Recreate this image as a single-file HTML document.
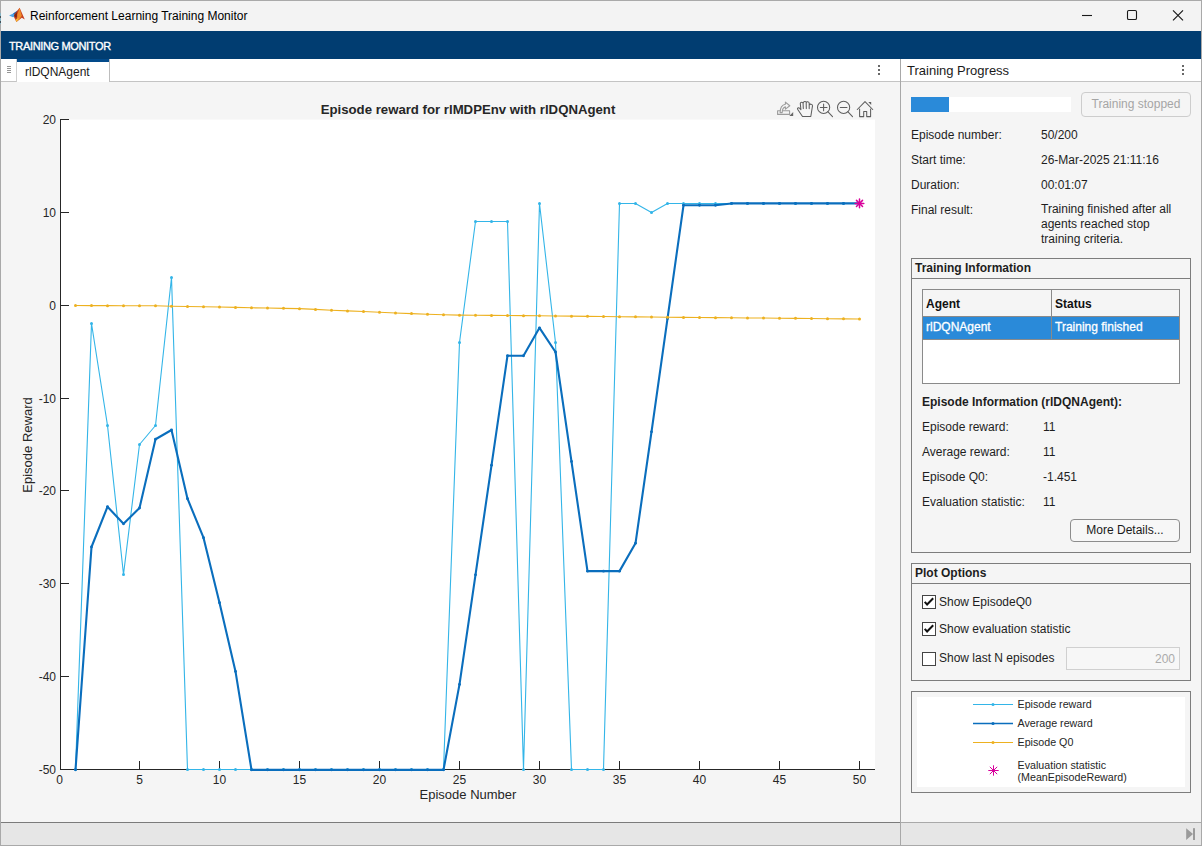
<!DOCTYPE html>
<html><head><meta charset="utf-8"><style>
*{box-sizing:border-box}
html,body{margin:0;padding:0}
body{width:1202px;height:846px;overflow:hidden;position:relative;background:#f5f5f5;font-family:"Liberation Sans",sans-serif;font-size:12px;color:#1e1e1e}
.abs{position:absolute}
.t{position:absolute;white-space:nowrap;line-height:14px}
.grp{position:absolute;border:1px solid #7d7d7d}
.chk{position:absolute;width:14px;height:14px;border:1px solid #444;background:#fff}
</style></head><body>
<!-- window border -->
<div class="abs" style="left:0;top:0;width:1202px;height:846px;border:1px solid #a9a9a9;z-index:50;pointer-events:none"></div>
<!-- title bar -->
<div class="abs" style="left:0;top:13px;width:1px;height:11px;background:#86b4c4;z-index:60"></div>
<div class="abs" style="left:0;top:16px;width:1px;height:2px;background:#46535a;z-index:60"></div>
<div class="abs" style="left:0;top:21px;width:1px;height:2px;background:#46535a;z-index:60"></div>
<div class="abs" style="left:0;top:0;width:1202px;height:31px;background:#f3f3f3"></div>
<svg class="abs" style="left:8px;top:6px" width="18" height="18" viewBox="8 6 18 18">
<path d="M9.1 15.6 L13.2 13.4 L15.6 12.2 L14.8 16.6 L13 17.2 Z" fill="#4aa3e8"/>
<path d="M13.2 13.4 L17.8 10.2 L16.3 15.6 L14.4 14.8 Z" fill="#2c62a8"/>
<path d="M14.4 14.6 L19.6 7.7 L24.8 19.6 L21.8 17.8 L16.4 22 L14.2 17.6 Z" fill="#c8401f"/>
<path d="M14.3 15.2 L17 12 L16.8 17.5 L14.6 17.2 Z" fill="#7e2414"/>
<path d="M17.4 14.2 L19.6 7.9 L21.8 15.8 L19.6 19 L16.8 21.5 Z" fill="#ee8b2a"/>
<path d="M15.6 19.5 L18.8 18 L16.6 22 Z" fill="#f6c133"/>
</svg>
<div class="t" style="left:30px;top:9px;font-size:12px;color:#000">Reinforcement Learning Training Monitor</div>
<svg class="abs" style="left:1070px;top:0" width="132" height="31" viewBox="1070 0 132 31" fill="none" stroke="#1a1a1a" stroke-width="1">
<path d="M1082 15.5 h10" stroke-width="1.1"/>
<rect x="1127.5" y="10.5" width="9" height="9" rx="1.3" stroke-width="1.1"/>
<path d="M1173 10.3 l10 10 M1183 10.3 l-10 10" stroke-width="1.15"/>
</svg>
<!-- blue bar -->
<div class="abs" style="left:0;top:31px;width:1202px;height:28px;background:#013d71"></div>
<div class="t" style="left:9px;top:39px;font-size:11px;letter-spacing:-0.35px;color:#fff;-webkit-text-stroke:0.35px #fff">TRAINING MONITOR</div>
<!-- tab row left -->
<div class="abs" style="left:1px;top:59px;width:899px;height:23px;background:#fff;border-bottom:1px solid #c4c4c4"></div>
<div class="abs" style="left:1px;top:59px;width:16px;height:23px;background:#fff;border-right:1px solid #cfcfcf;border-bottom:1px solid #c4c4c4"></div>
<svg class="abs" style="left:6px;top:65px" width="6" height="9" viewBox="0 0 6 9"><g stroke="#8a8a8a" stroke-width="0.9"><path d="M1 1.5h4M1 3.5h4M1 5.5h4M1 7.5h4"/></g></svg>
<div class="abs" style="left:17px;top:59px;width:92px;height:23px;background:#fff;border-top:3px solid #024a8a"></div>
<div class="abs" style="left:109px;top:59px;width:1px;height:23px;background:#bdbdbd"></div>
<div class="t" style="left:25px;top:65px;font-size:12px;color:#1a1a1a">rlDQNAgent</div>
<svg class="abs" style="left:876px;top:63px" width="6" height="14" viewBox="876 63 6 14"><g fill="#686868"><rect x="878" y="65" width="2" height="2"/><rect x="878" y="69" width="2" height="2"/><rect x="878" y="73" width="2" height="2"/></g></svg>
<!-- right header -->
<div class="abs" style="left:900px;top:59px;width:301px;height:23px;background:#fff;border-bottom:1px solid #c4c4c4"></div>
<div class="t" style="left:907px;top:64px;font-size:13px;color:#1a1a1a">Training Progress</div>
<svg class="abs" style="left:1180px;top:63px" width="6" height="14" viewBox="1180 63 6 14"><g fill="#686868"><rect x="1182" y="65" width="2" height="2"/><rect x="1182" y="69" width="2" height="2"/><rect x="1182" y="73" width="2" height="2"/></g></svg>
<!-- separator -->
<div class="abs" style="left:900px;top:59px;width:1px;height:787px;background:#a8a8a8;z-index:5"></div>
<!-- status bar -->
<div class="abs" style="left:0;top:822px;width:1202px;height:24px;background:#e6e6e6;border-top:1px solid #a9a9a9"></div>
<div class="abs" style="left:1px;top:822px;width:899px;height:1px;background:#7b7b7b"></div>
<svg class="abs" style="left:1184px;top:826px" width="14" height="16" viewBox="1184 826 14 16"><path d="M1186.2 828.2 L1193 834.1 L1186.2 840z" fill="#9a9a9a"/><rect x="1193" y="828.2" width="2" height="11.8" fill="#9a9a9a"/></svg>
<svg class="abs" style="left:0;top:82px" width="900" height="740" viewBox="0 82 900 740">
<rect x="61" y="119.6" width="814" height="650" fill="#fff"/>
<g stroke="#262626" stroke-width="1" fill="none" shape-rendering="crispEdges">
<line x1="60.5" y1="119" x2="60.5" y2="770"/>
<line x1="60" y1="769.5" x2="875" y2="769.5"/>
<line x1="60" y1="119.5" x2="68.5" y2="119.5"/><line x1="60" y1="212.5" x2="68.5" y2="212.5"/><line x1="60" y1="305.5" x2="68.5" y2="305.5"/><line x1="60" y1="398.5" x2="68.5" y2="398.5"/><line x1="60" y1="490.5" x2="68.5" y2="490.5"/><line x1="60" y1="583.5" x2="68.5" y2="583.5"/><line x1="60" y1="676.5" x2="68.5" y2="676.5"/><line x1="60" y1="769.5" x2="68.5" y2="769.5"/><line x1="139.5" y1="760.5" x2="139.5" y2="769"/><line x1="219.5" y1="760.5" x2="219.5" y2="769"/><line x1="299.5" y1="760.5" x2="299.5" y2="769"/><line x1="379.5" y1="760.5" x2="379.5" y2="769"/><line x1="459.5" y1="760.5" x2="459.5" y2="769"/><line x1="539.5" y1="760.5" x2="539.5" y2="769"/><line x1="619.5" y1="760.5" x2="619.5" y2="769"/><line x1="699.5" y1="760.5" x2="699.5" y2="769"/><line x1="779.5" y1="760.5" x2="779.5" y2="769"/><line x1="859.5" y1="760.5" x2="859.5" y2="769"/>
</g>
<g font-family="Liberation Sans" font-size="12" fill="#262626"><text x="56" y="123.9" text-anchor="end">20</text><text x="56" y="216.8" text-anchor="end">10</text><text x="56" y="309.6" text-anchor="end">0</text><text x="56" y="402.5" text-anchor="end">-10</text><text x="56" y="495.3" text-anchor="end">-20</text><text x="56" y="588.2" text-anchor="end">-30</text><text x="56" y="681.0" text-anchor="end">-40</text><text x="56" y="773.9" text-anchor="end">-50</text><text x="59.5" y="784.3" text-anchor="middle">0</text><text x="139.5" y="784.3" text-anchor="middle">5</text><text x="219.5" y="784.3" text-anchor="middle">10</text><text x="299.5" y="784.3" text-anchor="middle">15</text><text x="379.5" y="784.3" text-anchor="middle">20</text><text x="459.5" y="784.3" text-anchor="middle">25</text><text x="539.5" y="784.3" text-anchor="middle">30</text><text x="619.5" y="784.3" text-anchor="middle">35</text><text x="699.5" y="784.3" text-anchor="middle">40</text><text x="779.5" y="784.3" text-anchor="middle">45</text><text x="859.5" y="784.3" text-anchor="middle">50</text></g>
<text x="468" y="798.8" text-anchor="middle" font-family="Liberation Sans" font-size="13" fill="#262626">Episode Number</text>
<text transform="translate(32.4,445) rotate(-90)" text-anchor="middle" font-family="Liberation Sans" font-size="13" fill="#262626">Episode Reward</text>
<text x="468" y="114.2" text-anchor="middle" font-family="Liberation Sans" font-weight="bold" font-size="13.2" fill="#262626">Episode reward for rlMDPEnv with rlDQNAgent</text>
<polyline points="75.50,769.50 91.50,323.50 107.50,425.50 123.50,574.50 139.50,444.50 155.50,425.50 171.50,277.50 187.50,769.50 203.50,769.50 219.50,769.50 235.50,769.50 251.50,769.50 267.50,769.50 283.50,769.50 299.50,769.50 315.50,769.50 331.50,769.50 347.50,769.50 363.50,769.50 379.50,769.50 395.50,769.50 411.50,769.50 427.50,769.50 443.50,769.50 459.50,342.50 475.50,221.50 491.50,221.50 507.50,221.50 523.50,769.50 539.50,203.50 555.50,342.50 571.50,769.50 587.50,769.50 603.50,769.50 619.50,203.50 635.50,203.50 651.50,212.50 667.50,203.50 683.50,203.50 699.50,203.50 715.50,203.50 731.50,203.50 747.50,203.50 763.50,203.50 779.50,203.50 795.50,203.50 811.50,203.50 827.50,203.50 843.50,203.50 859.50,203.50" fill="none" stroke="#33b5e8" stroke-width="1.1" stroke-linejoin="round"/>
<circle cx="75.50" cy="769.50" r="1.5" fill="#33b5e8"/><circle cx="91.50" cy="323.50" r="1.5" fill="#33b5e8"/><circle cx="107.50" cy="425.50" r="1.5" fill="#33b5e8"/><circle cx="123.50" cy="574.50" r="1.5" fill="#33b5e8"/><circle cx="139.50" cy="444.50" r="1.5" fill="#33b5e8"/><circle cx="155.50" cy="425.50" r="1.5" fill="#33b5e8"/><circle cx="171.50" cy="277.50" r="1.5" fill="#33b5e8"/><circle cx="187.50" cy="769.50" r="1.5" fill="#33b5e8"/><circle cx="203.50" cy="769.50" r="1.5" fill="#33b5e8"/><circle cx="219.50" cy="769.50" r="1.5" fill="#33b5e8"/><circle cx="235.50" cy="769.50" r="1.5" fill="#33b5e8"/><circle cx="251.50" cy="769.50" r="1.5" fill="#33b5e8"/><circle cx="267.50" cy="769.50" r="1.5" fill="#33b5e8"/><circle cx="283.50" cy="769.50" r="1.5" fill="#33b5e8"/><circle cx="299.50" cy="769.50" r="1.5" fill="#33b5e8"/><circle cx="315.50" cy="769.50" r="1.5" fill="#33b5e8"/><circle cx="331.50" cy="769.50" r="1.5" fill="#33b5e8"/><circle cx="347.50" cy="769.50" r="1.5" fill="#33b5e8"/><circle cx="363.50" cy="769.50" r="1.5" fill="#33b5e8"/><circle cx="379.50" cy="769.50" r="1.5" fill="#33b5e8"/><circle cx="395.50" cy="769.50" r="1.5" fill="#33b5e8"/><circle cx="411.50" cy="769.50" r="1.5" fill="#33b5e8"/><circle cx="427.50" cy="769.50" r="1.5" fill="#33b5e8"/><circle cx="443.50" cy="769.50" r="1.5" fill="#33b5e8"/><circle cx="459.50" cy="342.50" r="1.5" fill="#33b5e8"/><circle cx="475.50" cy="221.50" r="1.5" fill="#33b5e8"/><circle cx="491.50" cy="221.50" r="1.5" fill="#33b5e8"/><circle cx="507.50" cy="221.50" r="1.5" fill="#33b5e8"/><circle cx="523.50" cy="769.50" r="1.5" fill="#33b5e8"/><circle cx="539.50" cy="203.50" r="1.5" fill="#33b5e8"/><circle cx="555.50" cy="342.50" r="1.5" fill="#33b5e8"/><circle cx="571.50" cy="769.50" r="1.5" fill="#33b5e8"/><circle cx="587.50" cy="769.50" r="1.5" fill="#33b5e8"/><circle cx="603.50" cy="769.50" r="1.5" fill="#33b5e8"/><circle cx="619.50" cy="203.50" r="1.5" fill="#33b5e8"/><circle cx="635.50" cy="203.50" r="1.5" fill="#33b5e8"/><circle cx="651.50" cy="212.50" r="1.5" fill="#33b5e8"/><circle cx="667.50" cy="203.50" r="1.5" fill="#33b5e8"/><circle cx="683.50" cy="203.50" r="1.5" fill="#33b5e8"/><circle cx="699.50" cy="203.50" r="1.5" fill="#33b5e8"/><circle cx="715.50" cy="203.50" r="1.5" fill="#33b5e8"/><circle cx="731.50" cy="203.50" r="1.5" fill="#33b5e8"/><circle cx="747.50" cy="203.50" r="1.5" fill="#33b5e8"/><circle cx="763.50" cy="203.50" r="1.5" fill="#33b5e8"/><circle cx="779.50" cy="203.50" r="1.5" fill="#33b5e8"/><circle cx="795.50" cy="203.50" r="1.5" fill="#33b5e8"/><circle cx="811.50" cy="203.50" r="1.5" fill="#33b5e8"/><circle cx="827.50" cy="203.50" r="1.5" fill="#33b5e8"/><circle cx="843.50" cy="203.50" r="1.5" fill="#33b5e8"/><circle cx="859.50" cy="203.50" r="1.5" fill="#33b5e8"/>
<polyline points="75.50,769.85 91.50,546.99 107.50,506.75 123.50,523.78 139.50,507.99 155.50,439.28 171.50,429.99 187.50,498.71 203.50,537.71 219.50,602.71 235.50,671.42 251.50,769.85 267.50,769.85 283.50,769.85 299.50,769.85 315.50,769.85 331.50,769.85 347.50,769.85 363.50,769.85 379.50,769.85 395.50,769.85 411.50,769.85 427.50,769.85 443.50,769.85 459.50,684.42 475.50,574.85 491.50,465.28 507.50,355.71 523.50,355.71 539.50,327.85 555.50,351.99 571.50,461.56 587.50,571.14 603.50,571.14 619.50,571.14 635.50,543.28 651.50,431.85 667.50,318.56 683.50,205.28 699.50,205.28 715.50,205.28 731.50,203.42 747.50,203.42 763.50,203.42 779.50,203.42 795.50,203.42 811.50,203.42 827.50,203.42 843.50,203.42 859.50,203.42" fill="none" stroke="#0a6ebd" stroke-width="2.1" stroke-linejoin="round"/>
<circle cx="75.50" cy="769.85" r="1.45" fill="#0a6ebd"/><circle cx="91.50" cy="546.99" r="1.45" fill="#0a6ebd"/><circle cx="107.50" cy="506.75" r="1.45" fill="#0a6ebd"/><circle cx="123.50" cy="523.78" r="1.45" fill="#0a6ebd"/><circle cx="139.50" cy="507.99" r="1.45" fill="#0a6ebd"/><circle cx="155.50" cy="439.28" r="1.45" fill="#0a6ebd"/><circle cx="171.50" cy="429.99" r="1.45" fill="#0a6ebd"/><circle cx="187.50" cy="498.71" r="1.45" fill="#0a6ebd"/><circle cx="203.50" cy="537.71" r="1.45" fill="#0a6ebd"/><circle cx="219.50" cy="602.71" r="1.45" fill="#0a6ebd"/><circle cx="235.50" cy="671.42" r="1.45" fill="#0a6ebd"/><circle cx="251.50" cy="769.85" r="1.45" fill="#0a6ebd"/><circle cx="267.50" cy="769.85" r="1.45" fill="#0a6ebd"/><circle cx="283.50" cy="769.85" r="1.45" fill="#0a6ebd"/><circle cx="299.50" cy="769.85" r="1.45" fill="#0a6ebd"/><circle cx="315.50" cy="769.85" r="1.45" fill="#0a6ebd"/><circle cx="331.50" cy="769.85" r="1.45" fill="#0a6ebd"/><circle cx="347.50" cy="769.85" r="1.45" fill="#0a6ebd"/><circle cx="363.50" cy="769.85" r="1.45" fill="#0a6ebd"/><circle cx="379.50" cy="769.85" r="1.45" fill="#0a6ebd"/><circle cx="395.50" cy="769.85" r="1.45" fill="#0a6ebd"/><circle cx="411.50" cy="769.85" r="1.45" fill="#0a6ebd"/><circle cx="427.50" cy="769.85" r="1.45" fill="#0a6ebd"/><circle cx="443.50" cy="769.85" r="1.45" fill="#0a6ebd"/><circle cx="459.50" cy="684.42" r="1.45" fill="#0a6ebd"/><circle cx="475.50" cy="574.85" r="1.45" fill="#0a6ebd"/><circle cx="491.50" cy="465.28" r="1.45" fill="#0a6ebd"/><circle cx="507.50" cy="355.71" r="1.45" fill="#0a6ebd"/><circle cx="523.50" cy="355.71" r="1.45" fill="#0a6ebd"/><circle cx="539.50" cy="327.85" r="1.45" fill="#0a6ebd"/><circle cx="555.50" cy="351.99" r="1.45" fill="#0a6ebd"/><circle cx="571.50" cy="461.56" r="1.45" fill="#0a6ebd"/><circle cx="587.50" cy="571.14" r="1.45" fill="#0a6ebd"/><circle cx="603.50" cy="571.14" r="1.45" fill="#0a6ebd"/><circle cx="619.50" cy="571.14" r="1.45" fill="#0a6ebd"/><circle cx="635.50" cy="543.28" r="1.45" fill="#0a6ebd"/><circle cx="651.50" cy="431.85" r="1.45" fill="#0a6ebd"/><circle cx="667.50" cy="318.56" r="1.45" fill="#0a6ebd"/><circle cx="683.50" cy="205.28" r="1.45" fill="#0a6ebd"/><circle cx="699.50" cy="205.28" r="1.45" fill="#0a6ebd"/><circle cx="715.50" cy="205.28" r="1.45" fill="#0a6ebd"/><circle cx="731.50" cy="203.42" r="1.45" fill="#0a6ebd"/><circle cx="747.50" cy="203.42" r="1.45" fill="#0a6ebd"/><circle cx="763.50" cy="203.42" r="1.45" fill="#0a6ebd"/><circle cx="779.50" cy="203.42" r="1.45" fill="#0a6ebd"/><circle cx="795.50" cy="203.42" r="1.45" fill="#0a6ebd"/><circle cx="811.50" cy="203.42" r="1.45" fill="#0a6ebd"/><circle cx="827.50" cy="203.42" r="1.45" fill="#0a6ebd"/><circle cx="843.50" cy="203.42" r="1.45" fill="#0a6ebd"/><circle cx="859.50" cy="203.42" r="1.45" fill="#0a6ebd"/>
<polyline points="75.50,305.56 91.50,305.60 107.50,305.64 123.50,305.68 139.50,305.71 155.50,305.75 171.50,306.21 187.50,306.46 203.50,306.71 219.50,306.96 235.50,307.38 251.50,307.79 267.50,308.07 283.50,308.35 299.50,308.63 315.50,309.42 331.50,310.21 347.50,310.89 363.50,311.57 379.50,312.25 395.50,312.93 411.50,313.61 427.50,314.29 443.50,314.71 459.50,315.13 475.50,315.26 491.50,315.39 507.50,315.52 523.50,315.65 539.50,315.78 555.50,315.96 571.50,316.15 587.50,316.34 603.50,316.52 619.50,316.71 635.50,316.87 651.50,317.04 667.50,317.21 683.50,317.38 699.50,317.54 715.50,317.67 731.50,317.80 747.50,317.93 763.50,318.06 779.50,318.19 795.50,318.36 811.50,318.53 827.50,318.70 843.50,318.87 859.50,319.04" fill="none" stroke="#edb120" stroke-width="1.1" stroke-linejoin="round"/>
<circle cx="75.50" cy="305.56" r="1.5" fill="#edb120"/><circle cx="91.50" cy="305.60" r="1.5" fill="#edb120"/><circle cx="107.50" cy="305.64" r="1.5" fill="#edb120"/><circle cx="123.50" cy="305.68" r="1.5" fill="#edb120"/><circle cx="139.50" cy="305.71" r="1.5" fill="#edb120"/><circle cx="155.50" cy="305.75" r="1.5" fill="#edb120"/><circle cx="171.50" cy="306.21" r="1.5" fill="#edb120"/><circle cx="187.50" cy="306.46" r="1.5" fill="#edb120"/><circle cx="203.50" cy="306.71" r="1.5" fill="#edb120"/><circle cx="219.50" cy="306.96" r="1.5" fill="#edb120"/><circle cx="235.50" cy="307.38" r="1.5" fill="#edb120"/><circle cx="251.50" cy="307.79" r="1.5" fill="#edb120"/><circle cx="267.50" cy="308.07" r="1.5" fill="#edb120"/><circle cx="283.50" cy="308.35" r="1.5" fill="#edb120"/><circle cx="299.50" cy="308.63" r="1.5" fill="#edb120"/><circle cx="315.50" cy="309.42" r="1.5" fill="#edb120"/><circle cx="331.50" cy="310.21" r="1.5" fill="#edb120"/><circle cx="347.50" cy="310.89" r="1.5" fill="#edb120"/><circle cx="363.50" cy="311.57" r="1.5" fill="#edb120"/><circle cx="379.50" cy="312.25" r="1.5" fill="#edb120"/><circle cx="395.50" cy="312.93" r="1.5" fill="#edb120"/><circle cx="411.50" cy="313.61" r="1.5" fill="#edb120"/><circle cx="427.50" cy="314.29" r="1.5" fill="#edb120"/><circle cx="443.50" cy="314.71" r="1.5" fill="#edb120"/><circle cx="459.50" cy="315.13" r="1.5" fill="#edb120"/><circle cx="475.50" cy="315.26" r="1.5" fill="#edb120"/><circle cx="491.50" cy="315.39" r="1.5" fill="#edb120"/><circle cx="507.50" cy="315.52" r="1.5" fill="#edb120"/><circle cx="523.50" cy="315.65" r="1.5" fill="#edb120"/><circle cx="539.50" cy="315.78" r="1.5" fill="#edb120"/><circle cx="555.50" cy="315.96" r="1.5" fill="#edb120"/><circle cx="571.50" cy="316.15" r="1.5" fill="#edb120"/><circle cx="587.50" cy="316.34" r="1.5" fill="#edb120"/><circle cx="603.50" cy="316.52" r="1.5" fill="#edb120"/><circle cx="619.50" cy="316.71" r="1.5" fill="#edb120"/><circle cx="635.50" cy="316.87" r="1.5" fill="#edb120"/><circle cx="651.50" cy="317.04" r="1.5" fill="#edb120"/><circle cx="667.50" cy="317.21" r="1.5" fill="#edb120"/><circle cx="683.50" cy="317.38" r="1.5" fill="#edb120"/><circle cx="699.50" cy="317.54" r="1.5" fill="#edb120"/><circle cx="715.50" cy="317.67" r="1.5" fill="#edb120"/><circle cx="731.50" cy="317.80" r="1.5" fill="#edb120"/><circle cx="747.50" cy="317.93" r="1.5" fill="#edb120"/><circle cx="763.50" cy="318.06" r="1.5" fill="#edb120"/><circle cx="779.50" cy="318.19" r="1.5" fill="#edb120"/><circle cx="795.50" cy="318.36" r="1.5" fill="#edb120"/><circle cx="811.50" cy="318.53" r="1.5" fill="#edb120"/><circle cx="827.50" cy="318.70" r="1.5" fill="#edb120"/><circle cx="843.50" cy="318.87" r="1.5" fill="#edb120"/><circle cx="859.50" cy="319.04" r="1.5" fill="#edb120"/>
<g stroke="#d8009b" stroke-width="1.5" stroke-linecap="round"><line x1="855.20" y1="203.40" x2="863.80" y2="203.40"/><line x1="856.46" y1="200.36" x2="862.54" y2="206.44"/><line x1="859.50" y1="199.10" x2="859.50" y2="207.70"/><line x1="862.54" y1="200.36" x2="856.46" y2="206.44"/></g>
</svg>
<svg class="abs" style="left:770px;top:95px" width="110" height="25" viewBox="770 95 110 25" fill="none" stroke-linecap="round" stroke-linejoin="round">
<g stroke="#9c9c9c" stroke-width="1.1">
<rect x="777.6" y="110.8" width="12" height="3.6"/>
<path d="M780.1 112.6 C780.1 107.6 782.4 104.9 785.4 104.3 L785.4 102.1 L789.8 105.7 L785.4 109.1 L785.4 106.9 C783.8 107.2 782.3 109 782.2 112.6 Z" fill="#f5f5f5"/>
</g>
<path d="M789.3 116 L793.2 112.1 L793.2 116 Z" fill="#666" stroke="none"/>
<g stroke="#5e5e5e" stroke-width="1.05">
<path d="M802.5 116.5 L797.6 109.3 C797.1 108.3 798.3 107.3 799.3 108 L800.9 109.6 L800.3 103.6 C800.2 101.8 803 101.8 803.1 103.4 C803.2 100.9 806.1 100.9 806.2 102.7 C806.5 101.2 809.2 101.4 809.2 103.3 L809.3 105.2 C809.7 103.6 812.6 103.8 812.5 105.8 L811.6 111.5 L810.8 116.5 Z M803.1 103.4 L803.3 108.6 M806.2 102.7 L806.3 108.6 M809.2 103.3 L809.2 108.6"/>
<circle cx="823.6" cy="107.4" r="6.1"/><path d="M827.8 111.7 L832.5 116.6"/><path d="M820.3 107.4 h6.7 M823.6 104.1 v6.6"/>
<circle cx="843.6" cy="107.4" r="6.1"/><path d="M847.8 111.7 L852.5 116.6"/><path d="M840.3 107.4 h6.7"/>
<path d="M857.3 109.5 L865 101.6 L872.7 109.5 M859.6 109 V116.6 H863.7 V111.4 H866.7 V116.6 H870.6 V109"/>
</g>
<path d="M868.3 102 H871.2 V104.9 Z" fill="#5e5e5e" stroke="none"/>
</svg>
<!-- right panel content -->
<div class="abs" style="left:911px;top:97px;width:160px;height:15px;background:#fff"></div>
<div class="abs" style="left:911px;top:97px;width:38px;height:15px;background:#2a8ad9"></div>
<div class="abs" style="left:1081px;top:92px;width:110px;height:25px;border:1px solid #cdcdcd;border-radius:4px;background:#f5f5f5;color:#a5a5a5;font-size:12px;text-align:center;line-height:23px">Training stopped</div>
<div class="t" style="left:911px;top:128px">Episode number:</div>
<div class="t" style="left:1041px;top:128px">50/200</div>
<div class="t" style="left:911px;top:153px">Start time:</div>
<div class="t" style="left:1041px;top:153px">26-Mar-2025 21:11:16</div>
<div class="t" style="left:911px;top:178px">Duration:</div>
<div class="t" style="left:1041px;top:178px">00:01:07</div>
<div class="t" style="left:911px;top:203px">Final result:</div>
<div class="t" style="left:1041px;top:201.8px">Training finished after all</div>
<div class="t" style="left:1041px;top:216.6px">agents reached stop</div>
<div class="t" style="left:1041px;top:232.2px">training criteria.</div>
<!-- Training information group -->
<div class="grp" style="left:911px;top:258px;width:280px;height:295px"></div>
<div class="abs" style="left:912px;top:278px;width:278px;height:1px;background:#7d7d7d"></div>
<div class="t" style="left:915px;top:261px;font-weight:bold">Training Information</div>
<div class="abs" style="left:922px;top:289px;width:258px;height:95px;border:1px solid #8a8a8a;background:#fff"></div>
<div class="abs" style="left:923px;top:290px;width:256px;height:27px;background:#f5f5f5;border-bottom:1px solid #8a8a8a"></div>
<div class="abs" style="left:923px;top:317px;width:256px;height:23px;background:#2a8ad9;border-bottom:1px solid #8a8a8a"></div>
<div class="abs" style="left:1051px;top:290px;width:1px;height:49px;background:#8a8a8a"></div>
<div class="t" style="left:926px;top:297px;font-weight:bold;color:#111">Agent</div>
<div class="t" style="left:1055px;top:297px;font-weight:bold;color:#111">Status</div>
<div class="t" style="left:926px;top:320px;color:#fff;-webkit-text-stroke:0.3px #fff">rlDQNAgent</div>
<div class="t" style="left:1055px;top:320px;color:#fff;-webkit-text-stroke:0.3px #fff">Training finished</div>
<div class="t" style="left:922px;top:395px;font-weight:bold">Episode Information (rlDQNAgent):</div>
<div class="t" style="left:922px;top:420px">Episode reward:</div>
<div class="t" style="left:1043px;top:420px">11</div>
<div class="t" style="left:922px;top:445px">Average reward:</div>
<div class="t" style="left:1043px;top:445px">11</div>
<div class="t" style="left:922px;top:470px">Episode Q0:</div>
<div class="t" style="left:1043px;top:470px">-1.451</div>
<div class="t" style="left:922px;top:495px">Evaluation statistic:</div>
<div class="t" style="left:1043px;top:495px">11</div>
<div class="abs" style="left:1070px;top:519px;width:110px;height:23px;border:1px solid #8d8d8d;border-radius:4px;background:#f7f7f7;font-size:12px;text-align:center;line-height:21px;color:#1a1a1a">More Details...</div>
<!-- Plot options group -->
<div class="grp" style="left:911px;top:563px;width:280px;height:118px"></div>
<div class="abs" style="left:912px;top:583px;width:278px;height:1px;background:#7d7d7d"></div>
<div class="t" style="left:915px;top:566px;font-weight:bold">Plot Options</div>
<div class="chk" style="left:922px;top:595px"></div>
<div class="chk" style="left:922px;top:622px"></div>
<div class="chk" style="left:922px;top:652px"></div>
<svg class="abs" style="left:922px;top:595px" width="14" height="14" viewBox="0 0 14 14"><path d="M2.7 6.9 L5.1 9.5 L11.2 3.2" fill="none" stroke="#111" stroke-width="2"/></svg>
<svg class="abs" style="left:922px;top:622px" width="14" height="14" viewBox="0 0 14 14"><path d="M2.7 6.9 L5.1 9.5 L11.2 3.2" fill="none" stroke="#111" stroke-width="2"/></svg>
<div class="t" style="left:939px;top:595px">Show EpisodeQ0</div>
<div class="t" style="left:939px;top:622px">Show evaluation statistic</div>
<div class="t" style="left:939px;top:651px">Show last N episodes</div>
<div class="abs" style="left:1066px;top:647px;width:114px;height:23px;border:1px solid #d0d0d0;background:#f7f7f7;color:#a8a8a8;text-align:right;padding-right:4px;line-height:22px;color:#ababab">200</div>
<!-- legend group -->
<div class="grp" style="left:911px;top:691px;width:280px;height:102px"></div>
<div class="abs" style="left:917px;top:697px;width:268px;height:90px;background:#fff"></div>
<svg class="abs" style="left:917px;top:697px" width="268" height="90" viewBox="917 697 268 90">
<path d="M973 704.5 h40" stroke="#33b5e8" stroke-width="1.1"/><circle cx="993" cy="704.5" r="1.5" fill="#33b5e8"/>
<path d="M973 723.5 h40" stroke="#0a6ebd" stroke-width="1.3"/><circle cx="993" cy="723.5" r="1.6" fill="#0a6ebd"/>
<path d="M973 742.5 h40" stroke="#edb120" stroke-width="1.1"/><circle cx="993" cy="742.5" r="1.5" fill="#edb120"/>
<g stroke="#d8009b" stroke-width="1" stroke-linecap="round"><path d="M988.7 770.5 h9.6 M993.5 765.7 v9.6 M990.1 767.1 l6.8 6.8 M996.9 767.1 l-6.8 6.8"/></g>
<g font-family="Liberation Sans" font-size="10.7" fill="#262626">
<text x="1017.5" y="708">Episode reward</text>
<text x="1017.5" y="727">Average reward</text>
<text x="1017.5" y="746">Episode Q0</text>
<text x="1017.5" y="768.6">Evaluation statistic</text>
<text x="1017.5" y="780.7">(MeanEpisodeReward)</text>
</g>
</svg>
</body></html>
